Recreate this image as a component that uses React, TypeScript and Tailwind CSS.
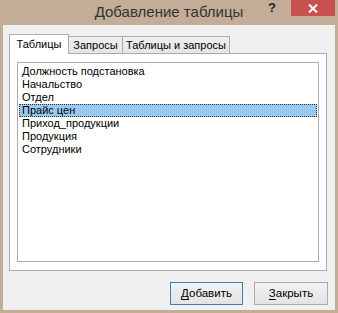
import React from 'react';

const tables = [
  'Должность подстановка',
  'Начальство',
  'Отдел',
  'Прайс цен',
  'Приход_продукции',
  'Продукция',
  'Сотрудники',
];

const ui = { fontFamily: '"Liberation Sans", Arial, sans-serif' };

export default function App() {
  const selected = 3;

  return (
    <div className="w-[338px] h-[313px] bg-[#c4ad97] flex flex-col overflow-hidden" style={ui}>
      {/* Title bar */}
      <div className="relative h-[25px] shrink-0">
        <div className="text-center text-[15px] leading-[23px] text-[#333]">Добавление таблицы</div>
        <div className="absolute top-0 right-[3px] flex items-start">
          <span className="w-[16px] mr-[11px] pt-px text-center text-[13px] leading-[14px] font-bold text-[#222]">?</span>
          <button className="w-[44px] h-[16px] bg-[#c75050] flex items-center justify-center">
            <svg width="10" height="9" viewBox="0 0 10 9">
              <path d="M1 0.5 L9 8.5 M9 0.5 L1 8.5" stroke="#fff" strokeWidth="2" />
            </svg>
          </button>
        </div>
      </div>

      {/* Dialog body */}
      <div className="mx-[3px] h-[285px] bg-[#f0f0f0] pt-[9px] pl-[6px] pr-[8px]">
        {/* Tabs */}
        <div className="flex items-end h-[19px] text-[11px] text-black">
          <div className="relative z-10 -mb-px w-[60px] h-[20px] text-center bg-white border border-b-0 border-[#acacac] leading-[19px]">
            Таблицы
          </div>
          <div className="w-[54px] h-[17px] text-center bg-gradient-to-b from-[#f0f0f0] to-[#e5e5e5] border border-l-0 border-b-0 border-[#acacac] leading-[16px]">
            Запросы
          </div>
          <div className="w-[107px] h-[17px] text-center bg-gradient-to-b from-[#f0f0f0] to-[#e5e5e5] border border-l-0 border-b-0 border-[#acacac] leading-[16px] whitespace-nowrap">
            Таблицы и запросы
          </div>
        </div>

        {/* Tab panel */}
        <div className="h-[218px] bg-white border border-[#acacac] pt-[8px] px-[7px] pb-[8px]">
          <div className="h-full border border-[#acacac] bg-white pt-[2px] px-px">
            {tables.map((t, i) => (
              <div
                key={t}
                className={
                  'h-[13px] pl-[3px] text-[11px] leading-[13px] text-black ' +
                  (i === selected ? 'bg-[#99c9ef] outline outline-1 outline-dotted outline-[#333] -outline-offset-1' : '')
                }
              >
                {t}
              </div>
            ))}
          </div>
        </div>

        {/* Buttons */}
        <div className="flex justify-end gap-[11px] mt-[11px] mr-[-1px] text-[11.5px] text-black">
          <button className="w-[73px] h-[23px] border border-[#3c7fb1] bg-gradient-to-b from-[#f2f2f2] to-[#e3e3e3]">
            <span className="underline underline-offset-2">Д</span>обавить
          </button>
          <button className="w-[74px] h-[23px] border border-[#acacac] bg-gradient-to-b from-[#f2f2f2] to-[#e3e3e3]">
            <span className="underline underline-offset-2">З</span>акрыть
          </button>
        </div>
      </div>
    </div>
  );
}
